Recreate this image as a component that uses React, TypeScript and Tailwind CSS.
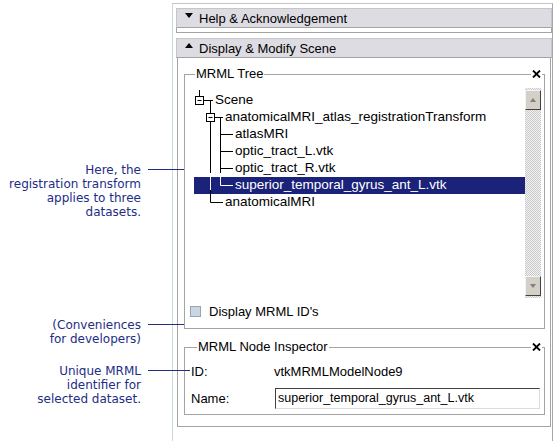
import React from 'react'

const SANS = "[font-family:'Liberation_Sans',Arial,sans-serif]"

type Row = { label: string; pad: number; selected?: boolean }

const ROWS: Row[] = [
  { label: 'Scene', pad: 21 },
  { label: 'anatomicalMRI_atlas_registrationTransform', pad: 31 },
  { label: 'atlasMRI', pad: 41 },
  { label: 'optic_tract_L.vtk', pad: 41 },
  { label: 'optic_tract_R.vtk', pad: 41 },
  { label: 'superior_temporal_gyrus_ant_L.vtk', pad: 41, selected: true },
  { label: 'anatomicalMRI', pad: 31 },
]

const NOTES = [
  { lines: ['Here, the', 'registration transform', 'applies to three', 'datasets.'], mt: 'mt-0', lineW: 'w-[36px]' },
  { lines: ['(Conveniences', 'for developers)'], mt: 'mt-[99px]', lineW: 'w-[36px]' },
  { lines: ['Unique MRML', 'identifier for', 'selected dataset.'], mt: 'mt-[18px]', lineW: 'w-[42px]' },
]

function CloseX() {
  return (
    <svg width="9" height="8" viewBox="0 0 9 8">
      <path d="M1 0.5L8 7.5M8 0.5L1 7.5" stroke="#000" strokeWidth="1.8" fill="none" />
    </svg>
  )
}

function Arrow({ up }: { up?: boolean }) {
  return (
    <svg width="8" height="5" viewBox="0 0 8 5">
      <polygon points={up ? '0,5 8,5 4,0' : '0,0 8,0 4,5'} fill="#000" />
    </svg>
  )
}

function SectionHeader({ title, up }: { title: string; up?: boolean }) {
  return (
    <div className="h-[20px] ml-[3px] flex items-center bg-[#dddce2] border border-[#c6c6c6] border-b-[#a4a4a4]">
      <div className="w-[22px] flex justify-center -mt-[6px] pl-[2px]">
        <Arrow up={up} />
      </div>
      <span className="text-[13px] leading-none text-black">{title}</span>
    </div>
  )
}

function TreeLines() {
  const k = '#000'
  const w = '#fff'
  return (
    <svg className="absolute inset-0 pointer-events-none" width="336" height="210" fill="none">
      {/* scene root tick */}
      <path d="M10.5 2V8.5" stroke={k} />
      {/* scene children line */}
      <path d="M14.5 12.5H24M21.5 12.5V85M21.5 102V114.5H34" stroke={k} />
      <path d="M21.5 85V102" stroke={w} />
      {/* transform children */}
      <path d="M25.5 29.5H34M31.5 29.5V85" stroke={k} />
      <path d="M31.5 46.5H44M31.5 63.5H44M31.5 80.5H44" stroke={k} />
      <path d="M31.5 85V97.5H44" stroke={w} />
      {/* expand boxes */}
      <rect x="6.5" y="8.5" width="8" height="8" fill="#fff" stroke={k} />
      <path d="M8.5 12.5H12.5" stroke={k} />
      <rect x="17.5" y="25.5" width="8" height="8" fill="#fff" stroke={k} />
      <path d="M19.5 29.5H23.5" stroke={k} />
    </svg>
  )
}

function ScrollButton({ up }: { up?: boolean }) {
  return (
    <div className="h-[20px] w-[16px] bg-[#d4d0c8] border border-t-[#f4f4f4] border-l-[#f4f4f4] border-r-[#404040] border-b-[#404040] flex items-center justify-center">
      <svg width="6" height="4" viewBox="0 0 6 4">
        <polygon points={up ? '0,4 6,4 3,0' : '0,0 6,0 3,4'} fill="#808080" />
      </svg>
    </div>
  )
}

function Legend({ title }: { title: string }) {
  return (
    <legend className="ml-[6px] px-[1px] text-[13px] leading-[14px] text-black">{title}</legend>
  )
}

export default function App() {
  return (
    <div className={`flex h-[441px] w-[555px] bg-white overflow-hidden ${SANS}`}>
      {/* annotations */}
      <div className="relative z-10 w-[172px] shrink-0 pt-[163px] text-[12px] leading-[14px] text-[#232d86] [font-family:'DejaVu_Sans',Verdana,sans-serif]">
        {NOTES.map((n) => (
          <div key={n.lines[0]} className={`relative ${n.mt}`}>
            <div className="w-[141px] text-right">
              {n.lines.map((l) => (
                <div key={l}>{l}</div>
              ))}
            </div>
            <div className={`absolute left-[148px] top-[6px] h-px bg-[#232d86] ${n.lineW}`} />
          </div>
        ))}
      </div>

      {/* panel */}
      <div className="mt-[3px] w-[381px] h-[438px] border-t border-l border-r border-t-[#c4c4c4] border-l-[#cddada] border-r-[#a8a8a8] pt-[4px]">
        <SectionHeader title="Help & Acknowledgement" />
        <div className="ml-[3px] h-[5px] border border-t-0 border-[#a4a4a4]" />

        <div className="mt-[5px]">
          <SectionHeader title="Display & Modify Scene" up />
          <div className="ml-[4px] mr-[1px] h-[369px] border border-t-0 border-[#a4a4a4] pt-[9px] pl-[6px] pr-[5px]">
            {/* MRML Tree */}
            <fieldset className="relative h-[262px] border border-[#a4a4a4] pl-[4px] pr-[2px]">
              <Legend title="MRML Tree" />
              <div className="absolute -top-[11px] right-[2px] bg-white px-[1px] leading-none">
                <CloseX />
              </div>
              <div className="mt-[7px] h-[210px] flex">
                <div className="relative w-[336px]">
                  <div className="pt-[4px] pl-[5px]">
                    {ROWS.map((r) => (
                      <div
                        key={r.label}
                        className={`h-[17px] flex items-center text-[13.5px] whitespace-nowrap ${
                          r.selected ? 'bg-[#1b2279] text-white' : 'text-black'
                        }`}
                        style={{ paddingLeft: r.pad }}
                      >
                        {r.label}
                      </div>
                    ))}
                  </div>
                  <TreeLines />
                </div>
                <div className="w-[16px] flex flex-col justify-between pt-[2px] pb-[2px] bg-[repeating-conic-gradient(#c8c8c8_0_25%,#f4f4f4_0_50%)] bg-[length:2px_2px]">
                  <ScrollButton up />
                  <ScrollButton />
                </div>
              </div>
              <label className="mt-[7px] flex items-center h-[14px] text-[13px] text-black">
                <span className="ml-[1px] -mt-[2px] w-[11px] h-[11px] bg-[#cbd6e4] border border-[#9aa4ae]" />
                <span className="ml-[8px]">Display MRML ID's</span>
              </label>
            </fieldset>

            {/* Node inspector */}
            <fieldset className="relative mt-[11px] h-[75px] border border-[#a4a4a4] pl-[6px] pr-[4px] text-[13px] text-black">
              <Legend title="MRML Node Inspector" />
              <div className="absolute -top-[11px] right-[2px] bg-white px-[1px] leading-none">
                <CloseX />
              </div>
              <div className="mt-[9px] h-[18px] flex items-center">
                <span className="w-[83px]">ID:</span>
                <span>vtkMRMLModelNode9</span>
              </div>
              <div className="mt-[7px] h-[21px] flex items-center">
                <span className="w-[84px]">Name:</span>
                <div className="flex-1 h-[21px] flex items-center pl-[2px] border border-t-[#404040] border-l-[#404040] border-r-[#dcdcdc] border-b-[#dcdcdc] text-[12.5px]">
                  superior_temporal_gyrus_ant_L.vtk
                </div>
              </div>
            </fieldset>
          </div>
        </div>
      </div>
    </div>
  )
}
